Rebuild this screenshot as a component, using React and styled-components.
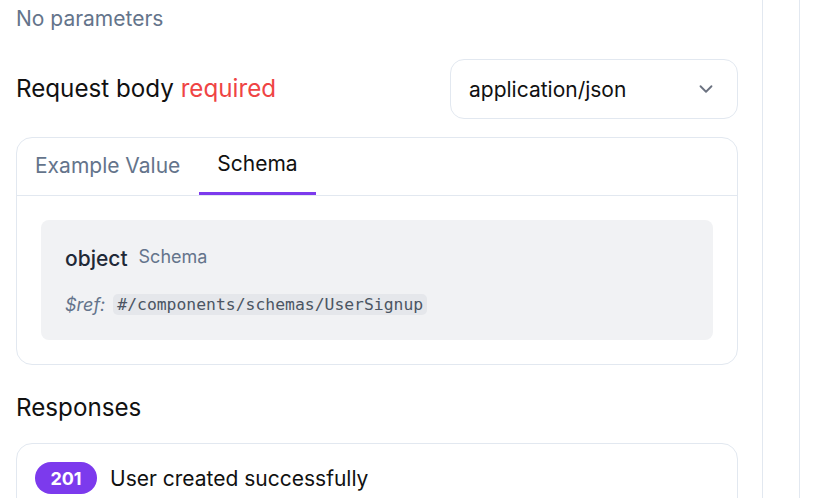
import React from "react";
import styled, { createGlobalStyle } from "styled-components";

const COLORS = {
  border: "#e2e8f0",
  slate: "#64748b",
  text: "#111111",
  red: "#ef4444",
  purple: "#7c3aed",
  codeBg: "#f1f2f4",
};

const GlobalStyle = createGlobalStyle`
  html, body {
    margin: 0;
    padding: 0;
    background: #ffffff;
    font-family: Inter, "Noto Sans", sans-serif;
    color: ${COLORS.text};
  }
  * { box-sizing: border-box; }
`;

const Page = styled.div`
  display: flex;
  height: 498px;
  overflow: hidden;
`;

const Main = styled.div`
  width: 763px;
  flex-shrink: 0;
  border-right: 1px solid ${COLORS.border};
  padding: 0 24px 0 16px;
`;

const Gutter = styled.div`
  width: 37px;
  flex-shrink: 0;
  border-right: 1px solid ${COLORS.border};
`;

const Muted = styled.p`
  margin: 0;
  padding-top: 5px;
  font-size: 21px;
  line-height: 28px;
  color: ${COLORS.slate};
`;

const RowHeader = styled.div`
  display: flex;
  align-items: center;
  justify-content: space-between;
  margin-top: 26px;
`;

const Title = styled.h3`
  margin: 0;
  font-size: 24.2px;
  font-weight: 400;
  line-height: 30px;
`;

const Required = styled.span`
  color: ${COLORS.red};
`;

const Select = styled.div`
  width: 288px;
  height: 60px;
  border: 1px solid ${COLORS.border};
  border-radius: 14px;
  display: flex;
  align-items: center;
  justify-content: space-between;
  padding: 0 20px 0 18px;
  font-size: 21px;
`;

const Card = styled.div`
  margin-top: 18px;
  border: 1px solid ${COLORS.border};
  border-radius: 16px;
`;

const Tabs = styled.div`
  display: flex;
  gap: 19px;
  padding-left: 18px;
  border-bottom: 1px solid ${COLORS.border};
  height: 58px;
`;

const Tab = styled.div`
  display: flex;
  align-items: center;
  padding: 0 ${(p) => (p.$active ? "18px" : "0")};
  font-size: 21px;
  color: ${(p) => (p.$active ? COLORS.text : COLORS.slate)};
  border-bottom: 3px solid ${(p) => (p.$active ? COLORS.purple : "transparent")};
  padding-bottom: ${(p) => (p.$active ? "4px" : "0")};
`;

const CardBody = styled.div`
  padding: 24px;
`;

const SchemaBox = styled.div`
  background: ${COLORS.codeBg};
  border-radius: 8px;
  padding: 26px 24px 24px;
  height: 120px;
`;

const TypeLine = styled.div`
  display: flex;
  align-items: center;
  gap: 11px;
`;

const TypeName = styled.span`
  font-size: 21px;
  font-weight: 500;
  color: #1f2937;
`;

const TypeLabel = styled.span`
  font-size: 18px;
  color: ${COLORS.slate};
  margin-top: -4px;
`;

const RefLine = styled.div`
  display: flex;
  align-items: center;
  gap: 8px;
  margin-top: 23px;
`;

const RefKey = styled.span`
  font-style: italic;
  font-size: 18px;
  color: ${COLORS.slate};
`;

const Code = styled.code`
  font-family: "DejaVu Sans Mono", monospace;
  font-size: 16.4px;
  color: #4b5563;
  background: #e5e7eb;
  border-radius: 5px;
  padding: 1px 4px;
`;

const SectionTitle = styled.h3`
  margin: 28px 0 0;
  font-size: 24.2px;
  font-weight: 400;
  line-height: 30px;
`;

const ResponseCard = styled.div`
  margin-top: 20px;
  border: 1px solid ${COLORS.border};
  border-radius: 16px;
  padding: 18px 18px 30px;
  display: flex;
  align-items: center;
  gap: 13px;
`;

const Badge = styled.span`
  background: ${COLORS.purple};
  color: #fff;
  font-weight: 700;
  font-size: 18px;
  border-radius: 999px;
  width: 62px;
  height: 32px;
  display: flex;
  align-items: center;
  justify-content: center;
`;

const ResponseText = styled.span`
  font-size: 21px;
`;

const Chevron = () => (
  <svg width="22" height="22" viewBox="0 0 24 24" fill="none" stroke="#6b7280" strokeWidth="2" strokeLinecap="round" strokeLinejoin="round">
    <path d="m6 9 6 6 6-6" />
  </svg>
);

export default function App() {
  return (
    <>
      <GlobalStyle />
      <Page>
        <Main>
          <Muted>No parameters</Muted>
          <RowHeader>
            <Title>
              Request body <Required>required</Required>
            </Title>
            <Select>
              application/json
              <Chevron />
            </Select>
          </RowHeader>
          <Card>
            <Tabs>
              <Tab>Example Value</Tab>
              <Tab $active>Schema</Tab>
            </Tabs>
            <CardBody>
              <SchemaBox>
                <TypeLine>
                  <TypeName>object</TypeName>
                  <TypeLabel>Schema</TypeLabel>
                </TypeLine>
                <RefLine>
                  <RefKey>$ref:</RefKey>
                  <Code>#/components/schemas/UserSignup</Code>
                </RefLine>
              </SchemaBox>
            </CardBody>
          </Card>
          <SectionTitle>Responses</SectionTitle>
          <ResponseCard>
            <Badge>201</Badge>
            <ResponseText>User created successfully</ResponseText>
          </ResponseCard>
        </Main>
        <Gutter />
      </Page>
    </>
  );
}
